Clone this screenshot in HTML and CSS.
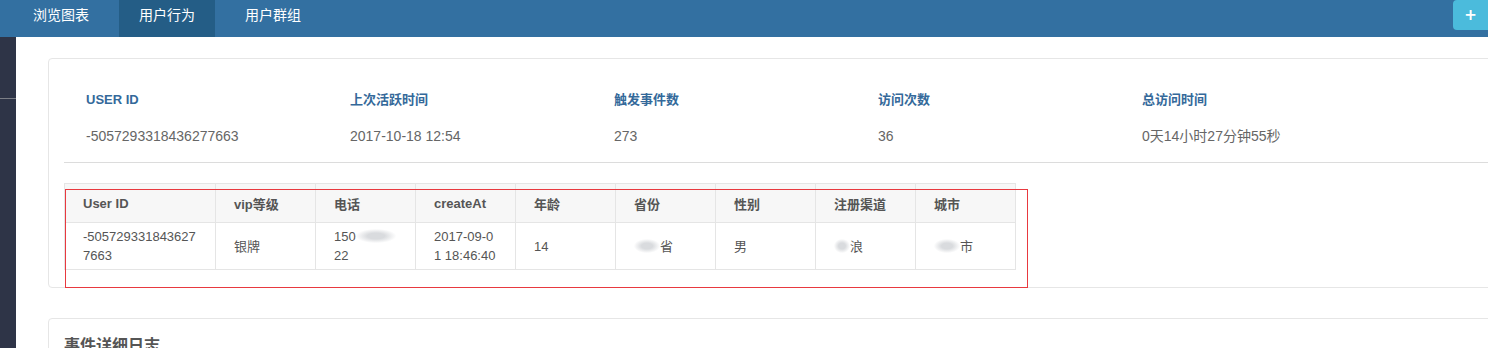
FILE: index.html
```html
<!DOCTYPE html>
<html lang="zh">
<head>
<meta charset="utf-8">
<title>用户行为</title>
<link rel="stylesheet" href="styles.css">
</head>
<body>
<header class="nav">
  <div class="tabs">
    <a class="tab">浏览图表</a>
    <a class="tab active">用户行为</a>
    <a class="tab">用户群组</a>
  </div>
  <button class="add">+</button>
</header>
<div class="layout">
  <aside class="sidebar"><div class="side-line"></div></aside>
  <main class="main">
    <section class="card">
      <div class="info">
        <div class="info-item"><div class="label">USER ID</div><div class="value">-5057293318436277663</div></div>
        <div class="info-item"><div class="label">上次活跃时间</div><div class="value">2017-10-18 12:54</div></div>
        <div class="info-item"><div class="label">触发事件数</div><div class="value">273</div></div>
        <div class="info-item"><div class="label">访问次数</div><div class="value">36</div></div>
        <div class="info-item"><div class="label">总访问时间</div><div class="value">0天14小时27分钟55秒</div></div>
      </div>
      <div class="table-wrap">
        <table class="props">
          <thead>
            <tr>
              <th class="fixed">User ID</th>
              <th>vip等级</th>
              <th>电话</th>
              <th>createAt</th>
              <th>年龄</th>
              <th>省份</th>
              <th>性别</th>
              <th>注册渠道</th>
              <th>城市</th>
            </tr>
          </thead>
          <tbody>
            <tr>
              <td class="fixed">-5057293318436277663</td>
              <td>银牌</td>
              <td>150<span class="blur b1"></span><br>22</td>
              <td>2017-09-01 18:46:40</td>
              <td>14</td>
              <td><span class="blur b2"></span>省</td>
              <td>男</td>
              <td><span class="blur b3"></span>浪</td>
              <td><span class="blur b2"></span>市</td>
            </tr>
          </tbody>
        </table>
        <svg class="mark" width="963" height="99" viewBox="0 0 963 99">
          <rect x="0.5" y="0.5" width="962" height="98" fill="none" stroke="#e8393f" stroke-width="1" shape-rendering="crispEdges"/>
        </svg>
      </div>
    </section>
    <section class="card card2">
      <h2 class="card-title">事件详细日志</h2>
    </section>
  </main>
</div>
</body>
</html>
```
FILE: styles.css
```css
* { box-sizing: border-box; }
html, body { margin: 0; padding: 0; }
body {
  font-family: "Liberation Sans", "Noto Sans CJK SC", sans-serif;
  background: #fff;
  width: 1488px;
  height: 348px;
  overflow: hidden;
}
.nav {
  height: 37px;
  background: #3370a1;
  display: flex;
  justify-content: space-between;
  align-items: flex-start;
}
.tabs {
  display: flex;
  gap: 10px;
  padding-left: 13px;
}
.tab {
  display: block;
  width: 96px;
  height: 37px;
  line-height: 31px;
  text-align: center;
  color: #fff;
  font-size: 14px;
}
.tab.active { background: #245d86; }
.add {
  width: 35px;
  height: 30px;
  border: 0;
  padding: 0;
  background: #4bbbdc;
  color: #fff;
  font-family: "DejaVu Sans", sans-serif;
  font-weight: bold;
  font-size: 15px;
  line-height: 30px;
  border-radius: 4px 0 0 4px;
}
.layout {
  display: flex;
  height: 311px;
}
.sidebar {
  width: 16px;
  flex: none;
  background: #2e3447;
  padding-top: 61px;
}
.side-line {
  height: 1px;
  background: #7b7e86;
}
.main {
  flex: 1;
  padding: 21px 0 0 32px;
  overflow: hidden;
}
.card {
  width: 1460px;
  border: 1px solid #e6e6e6;
  border-radius: 4px;
  padding: 16px 15px 17px;
  background: #fff;
}
.info {
  display: flex;
  padding: 15px 22px 16px;
  border-bottom: 1px solid #dcdcdc;
}
.info-item { width: 264px; }
.label {
  font-size: 13px;
  font-weight: bold;
  line-height: 20px;
  color: #34699a;
}
.value {
  margin-top: 16px;
  font-size: 14px;
  line-height: 20px;
  color: #666;
}
.table-wrap {
  position: relative;
  margin-top: 20px;
  width: 951px;
}
.props {
  border-collapse: collapse;
  table-layout: fixed;
  width: 951px;
  border: 1px solid #e5e5e5;
}
.props th, .props td {
  width: 100px;
  border: 1px solid #e5e5e5;
  padding: 0 18px;
  text-align: left;
  font-size: 13px;
  word-break: break-all;
  vertical-align: middle;
}
.props th.fixed, .props td.fixed { width: 151px; }
.props th {
  height: 39px;
  background: #f7f7f7;
  color: #555;
  font-weight: bold;
}
.props td {
  height: 47px;
  line-height: 19px;
  padding-top: 2px;
  padding-bottom: 2px;
  color: #555;
}
.props .fixed {
  position: relative;
  box-shadow: 1px 0 6px rgba(0, 0, 0, 0.14);
  background: #fff;
}
.props th.fixed { background: #f7f7f7; }
.blur {
  display: inline-block;
  height: 14px;
  vertical-align: -2px;
  border-radius: 4px;
  background: radial-gradient(ellipse at center, #d9dbde 30%, rgba(224, 226, 229, 0) 72%);
}
.b1 { width: 40px; }
.b2 { width: 26px; }
.b3 { width: 16px; }
.mark {
  position: absolute;
  left: 1px;
  top: 6px;
  display: block;
  overflow: visible;
}
.card2 {
  margin-top: 30px;
  height: 80px;
}
.card-title {
  margin: 0;
  font-size: 16px;
  line-height: 22px;
  font-weight: bold;
  color: #555;
}
```
